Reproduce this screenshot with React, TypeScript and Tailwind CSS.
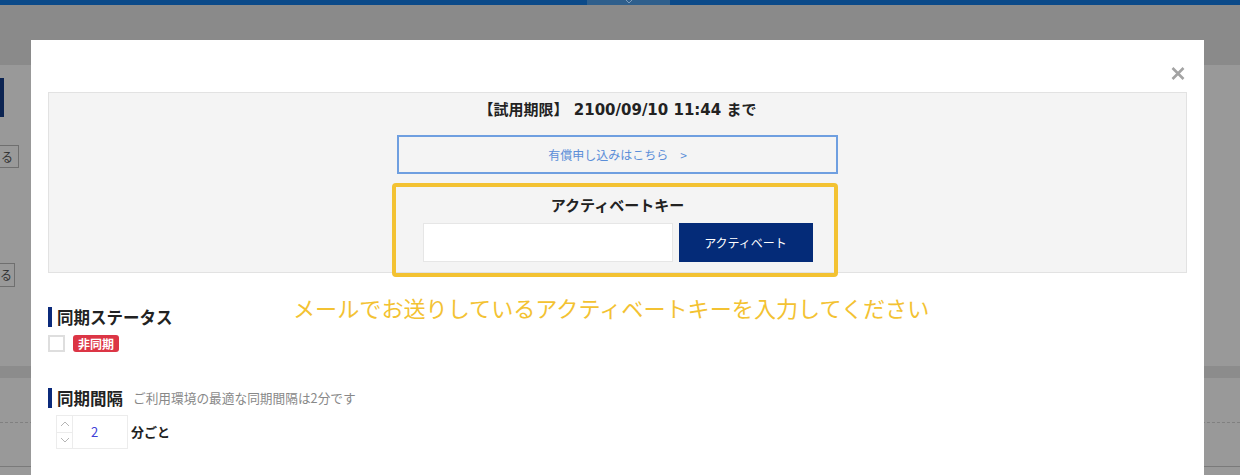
import React from "react";

const FONT = '"Noto Sans CJK JP", "Noto Sans", sans-serif';

function Background() {
  return (
    <div className="flex flex-col w-full h-full">
      <div className="flex h-[5px] bg-[#0b4a89]">
        <div className="w-[587px]" />
        <div className="w-[83px] bg-[#2f5f8c] flex justify-center">
          <svg width="8" height="5" viewBox="0 0 8 5" className="mt-[-1px]">
            <path d="M1 1 L4 4 L7 1" stroke="#7d9cbb" strokeWidth="1" fill="none" />
          </svg>
        </div>
      </div>
      <div className="h-[60px] bg-[#8a8a8a]" />
      <div className="flex flex-col flex-1 bg-[#999999]">
        <div className="mt-[13px] w-[4px] h-[39px] bg-[#0c2452]" />
        <div className="mt-[28px] w-[19px] h-[23px] border-y border-r border-[#6f6f6f] text-[12px] leading-[21px] text-[#333] pl-[1px] overflow-hidden">
          る
        </div>
        <div className="mt-[95px] w-[15px] h-[24px] border-y border-r border-[#6f6f6f] text-[12px] leading-[22px] text-[#333] overflow-hidden">
          る
        </div>
        <div className="mt-[79px] h-[12px] bg-[#8c8c8c]" />
        <div className="mt-[44px] border-t border-dashed border-[#808080]" />
        <div className="mt-[43px] border-t border-[#7a7a7a]" />
      </div>
    </div>
  );
}

function Modal() {
  return (
    <div className="absolute left-[31px] top-[40px] w-[1173px] h-[460px] bg-white px-[17px] flex flex-col">
      <div className="h-[52px] flex justify-end items-start pt-[27px] pr-[2px]">
        <svg width="14" height="13" viewBox="0 0 14 13">
          <path d="M1.5 1 L12.5 12 M12.5 1 L1.5 12" stroke="#a3a3a3" strokeWidth="2.6" strokeLinecap="butt" />
        </svg>
      </div>

      <div className="flex flex-col bg-[#f4f4f4] border border-[#e2e2e2]">
        <div
          className="pt-[6px] text-center text-[15px] leading-[22px] font-bold text-[#222]"
          style={{ fontFamily: '"DejaVu Sans", "Noto Sans CJK JP", sans-serif' }}
        >
          【試用期限】 2100/09/10 11:44 まで
        </div>
        <div className="mt-[14px] mx-auto w-[441px] h-[39px] border-2 border-[#6f9fe0] flex items-center justify-center text-[12px] text-[#5b8ed8]">
          有償申し込みはこちら　&gt;
        </div>
        <div className="mt-[9px] ml-[343px] w-[446px] mb-[-5px] border-4 border-[#f3c232] rounded-[4px] pl-[5px] pb-[11px] flex flex-col items-center">
          <div className="pt-[7px] text-[15px] leading-[22px] font-bold text-[#222]">アクティベートキー</div>
          <div className="mt-[7px] flex gap-[6px]">
            <div className="w-[250px] h-[39px] bg-white border border-[#e6e6e6]" />
            <div className="w-[134px] h-[39px] bg-[#042b78] text-white text-[12px] flex items-center justify-center">
              アクティベート
            </div>
          </div>
        </div>
      </div>

      <div className="mt-[34px] flex items-center h-[20px]">
        <div className="w-[4px] h-[20px] bg-[#0b2a7b]" />
        <div className="ml-[5px] text-[16.5px] leading-[20px] font-bold text-[#222]">同期ステータス</div>
      </div>
      <div className="mt-[8px] flex items-center gap-[8px] h-[17px]">
        <div className="w-[17px] h-[17px] border-2 border-[#dedede] bg-white" />
        <div className="h-[17px] px-[5px] rounded-[3px] bg-[#dc3545] text-white text-[12px] leading-[17px] font-bold">非同期</div>
      </div>

      <div className="mt-[36px] flex items-center h-[20px]">
        <div className="w-[4px] h-[20px] bg-[#0b2a7b]" />
        <div className="ml-[5px] text-[16.5px] leading-[20px] font-bold text-[#222]">同期間隔</div>
        <div className="ml-[10px] text-[12.7px] leading-[20px] text-[#888]">ご利用環境の最適な同期間隔は2分です</div>
      </div>
      <div className="mt-[7px] ml-[8px] flex items-center">
        <div className="flex w-[72px] h-[34px] border border-[#ececec]">
          <div className="w-[16px] flex flex-col border-r border-[#ececec] bg-white">
            <div className="flex-1 flex items-center justify-center border-b border-[#ececec]">
              <svg width="10" height="6" viewBox="0 0 10 6">
                <path d="M1 5 L5 1 L9 5" stroke="#b5b5b5" strokeWidth="1" fill="none" />
              </svg>
            </div>
            <div className="flex-1 flex items-center justify-center">
              <svg width="10" height="6" viewBox="0 0 10 6">
                <path d="M1 1 L5 5 L9 1" stroke="#b5b5b5" strokeWidth="1" fill="none" />
              </svg>
            </div>
          </div>
          <div className="flex-1 pl-[18px] flex items-center text-[13px] text-[#4040d8]">2</div>
        </div>
        <div className="ml-[3px] text-[13px] font-bold text-[#222]">分ごと</div>
      </div>

      <div className="absolute left-[262px] top-[256px] text-[22.1px] leading-[22px] text-[#f3c232] whitespace-nowrap">
        メールでお送りしているアクティベートキーを入力してください
      </div>
    </div>
  );
}

export default function App() {
  return (
    <div className="relative w-[1240px] h-[475px] overflow-hidden" style={{ fontFamily: FONT }}>
      <Background />
      <Modal />
    </div>
  );
}
